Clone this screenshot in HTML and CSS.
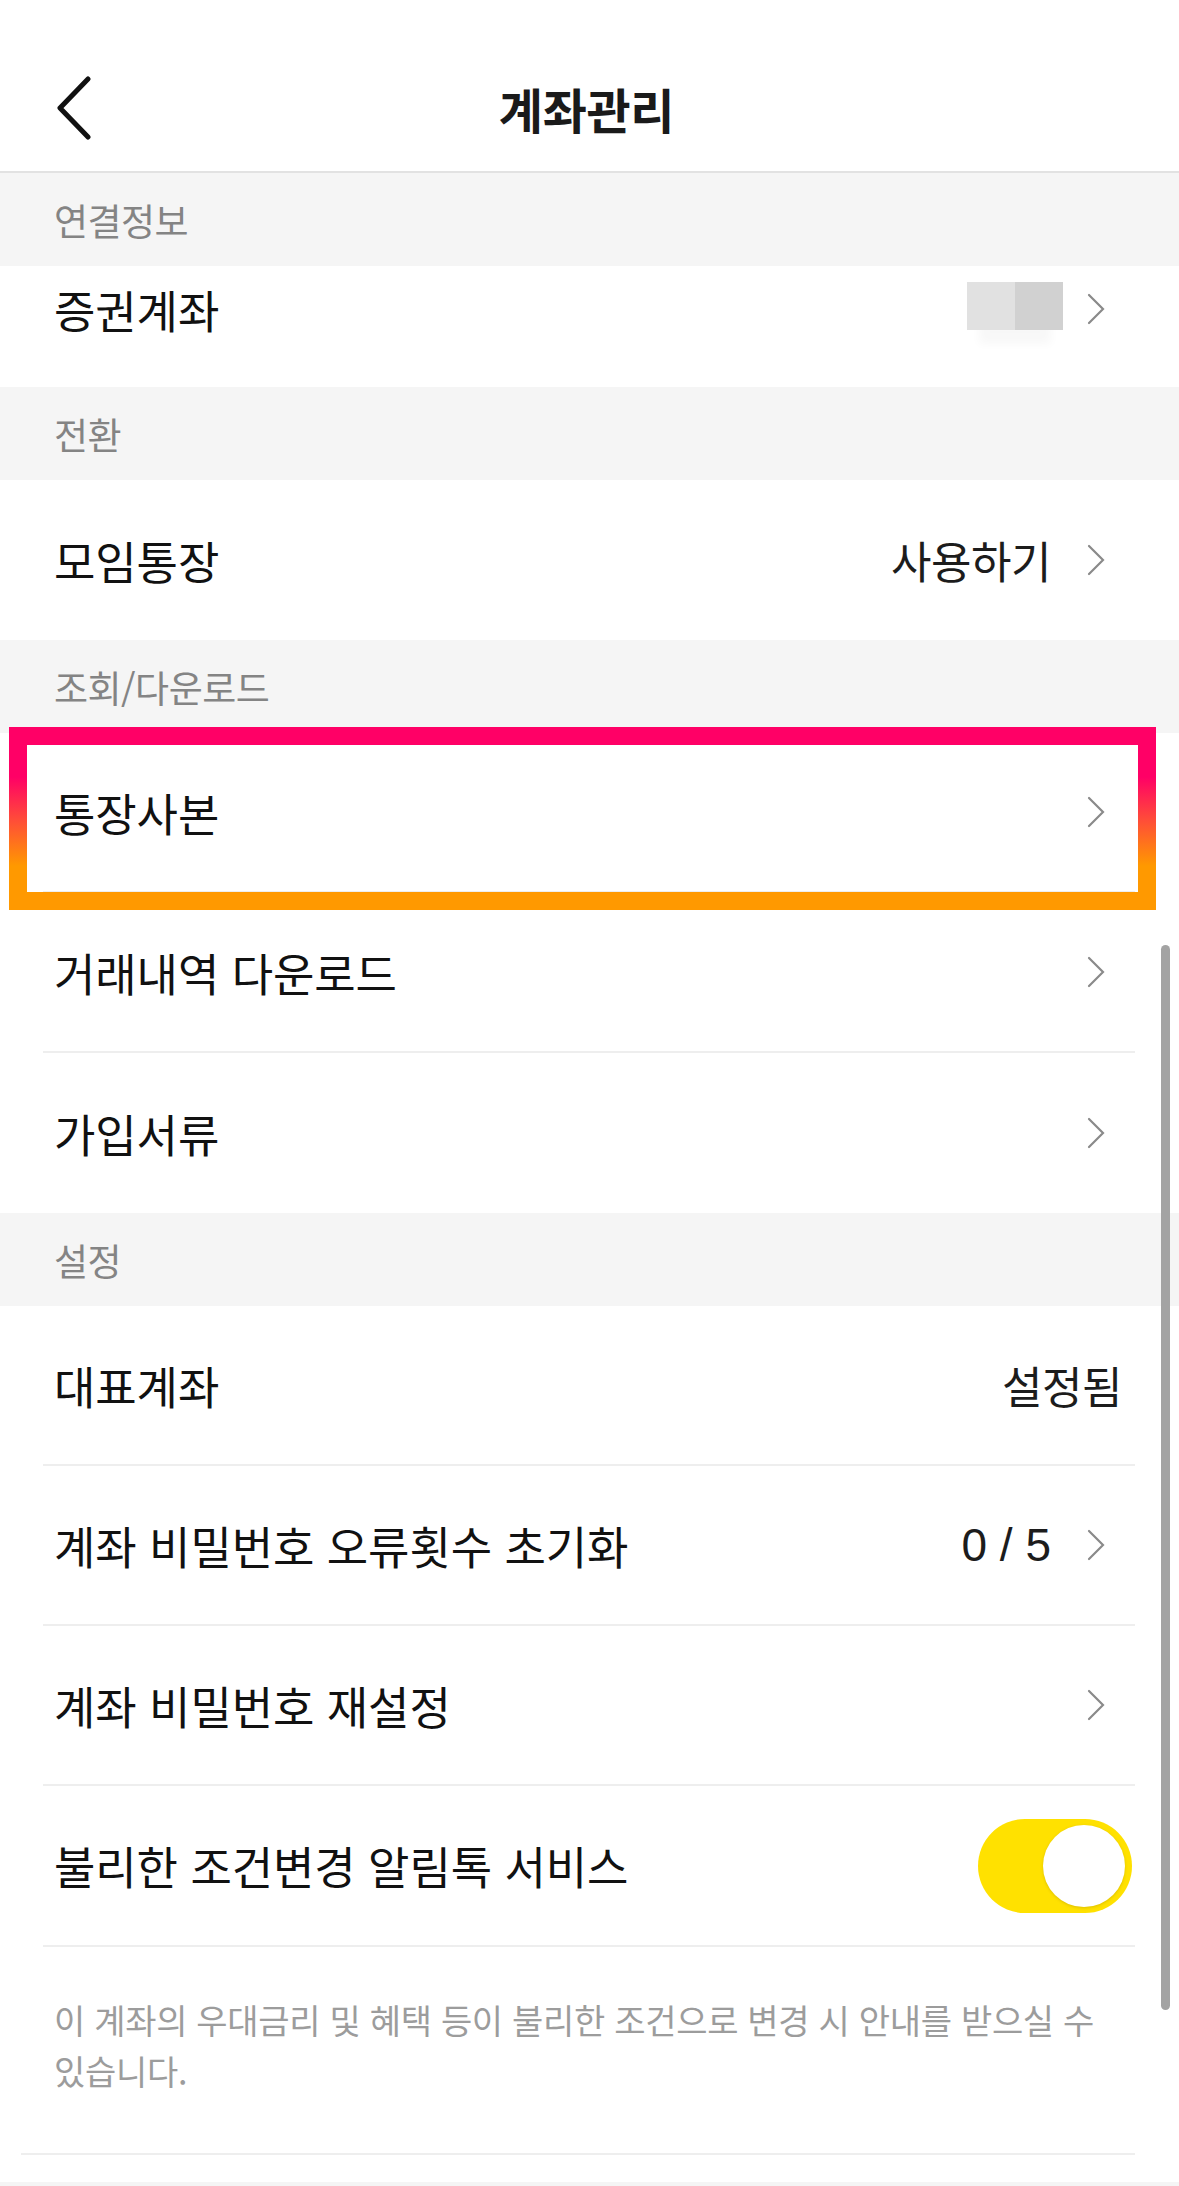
FILE: index.html
```html
<!DOCTYPE html>
<html lang="ko">
<head>
<meta charset="utf-8">
<title>계좌관리</title>
<link rel="stylesheet" href="styles.css">
</head>
<body>
<div class="page">
  <header class="topbar">
    <div class="back">
      <svg width="40" height="66" viewBox="0 0 40 66"><polyline points="31,4 3,33 31,62" fill="none" stroke="#111" stroke-width="5" stroke-linecap="round" stroke-linejoin="round"/></svg>
    </div>
    <h1 class="title">계좌관리</h1>
    <div class="spacer"></div>
  </header>

  <div class="band">연결정보</div>
  <div class="row short">
    <span class="label">증권계좌</span>
    <span class="blur"><i class="b1"></i><i class="b2"></i></span>
    <svg class="chev" viewBox="0 0 18 32"><polyline points="2,2 16,16 2,30" fill="none" stroke="#8a8a8a" stroke-width="2.2" stroke-linecap="round"/></svg>
  </div>

  <div class="band">전환</div>
  <div class="row">
    <span class="label">모임통장</span>
    <span class="value">사용하기</span>
    <svg class="chev" viewBox="0 0 18 32"><polyline points="2,2 16,16 2,30" fill="none" stroke="#8a8a8a" stroke-width="2.2" stroke-linecap="round"/></svg>
  </div>

  <div class="band">조회/다운로드</div>
  <div class="row div hl-row">
    <span class="label">통장사본</span>
    <svg class="chev" viewBox="0 0 18 32"><polyline points="2,2 16,16 2,30" fill="none" stroke="#8a8a8a" stroke-width="2.2" stroke-linecap="round"/></svg>
    <span class="highlight"></span>
  </div>
  <div class="row div">
    <span class="label">거래내역 다운로드</span>
    <svg class="chev" viewBox="0 0 18 32"><polyline points="2,2 16,16 2,30" fill="none" stroke="#8a8a8a" stroke-width="2.2" stroke-linecap="round"/></svg>
  </div>
  <div class="row">
    <span class="label">가입서류</span>
    <svg class="chev" viewBox="0 0 18 32"><polyline points="2,2 16,16 2,30" fill="none" stroke="#8a8a8a" stroke-width="2.2" stroke-linecap="round"/></svg>
  </div>

  <div class="band">설정</div>
  <div class="row div">
    <span class="label">대표계좌</span>
    <span class="value end">설정됨</span>
  </div>
  <div class="row div">
    <span class="label">계좌 비밀번호 오류횟수 초기화</span>
    <span class="value num">0 / 5</span>
    <svg class="chev" viewBox="0 0 18 32"><polyline points="2,2 16,16 2,30" fill="none" stroke="#8a8a8a" stroke-width="2.2" stroke-linecap="round"/></svg>
  </div>
  <div class="row div">
    <span class="label">계좌 비밀번호 재설정</span>
    <svg class="chev" viewBox="0 0 18 32"><polyline points="2,2 16,16 2,30" fill="none" stroke="#8a8a8a" stroke-width="2.2" stroke-linecap="round"/></svg>
  </div>
  <div class="row div tall">
    <span class="label">불리한 조건변경 알림톡 서비스</span>
    <span class="toggle"><span class="knob"></span></span>
  </div>
  <div class="desc">이 계좌의 우대금리 및 혜택 등이 불리한 조건으로 변경 시 안내를 받으실 수 있습니다.</div>
  <div class="gap"></div>
  <div class="band foot"></div>

  <div class="scrollbar"></div>
</div>
</body>
</html>
```

FILE: styles.css
```css
* { box-sizing: border-box; }
html, body { margin: 0; padding: 0; background: #fff; }
body {
  font-family: "Noto Sans CJK KR", "Noto Sans", sans-serif;
  color: #111;
}
.page {
  position: relative;
  width: 1179px;
  min-height: 2186px;
  overflow: hidden;
}
.topbar {
  height: 173px;
  padding-top: 44px;
  border-bottom: 2px solid #e2e2e2;
  display: grid;
  grid-template-columns: 1fr auto 1fr;
  align-items: center;
}
.back {
  padding-left: 57px;
  display: flex;
  align-items: center;
}
.back svg { display: block; }
.title {
  margin: 0;
  font-size: 48px;
  font-weight: 700;
  color: #1a1a1a;
  letter-spacing: -0.3px;
  line-height: 64px;
  padding-right: 6px;
}
.band {
  height: 93px;
  background: #f5f5f5;
  display: flex;
  align-items: center;
  padding-left: 54px;
  font-size: 37px;
  color: #848484;
  letter-spacing: -0.5px;
}
.band.foot { height: 30px; }
.row {
  position: relative;
  height: 160px;
  margin: 0 44px 0 43px;
  padding: 0 13px 0 11px;
  display: flex;
  align-items: center;
  font-size: 45px;
}
.row.div { border-bottom: 2px solid #eeeeee; }
.row.tall { height: 161px; }
.row.short {
  height: 121px;
  padding-bottom: 35px;
}
.label {
  flex: 1;
  color: #111;
  letter-spacing: -0.1px;
  white-space: nowrap;
}
.value {
  font-size: 44px;
  color: #1c1c1c;
  margin-right: 36px;
  letter-spacing: -0.5px;
}
.value.end { margin-right: 0; }
.value.num {
  font-family: "Liberation Sans", "Noto Sans", sans-serif;
  font-size: 46px;
  letter-spacing: 0;
  margin-right: 36px;
}
.chev {
  width: 18px;
  height: 32px;
  margin-right: 17px;
  flex: none;
}
.blur {
  display: flex;
  margin-right: 24px;
  margin-top: -6px;
  box-shadow: 0 26px 10px -12px rgba(0,0,0,0.03);
}
.blur i { display: block; width: 48px; height: 48px; }
.blur .b1 { background: #e1e1e1; }
.blur .b2 { background: #d1d1d1; }
.highlight {
  position: absolute;
  left: -34px;
  right: -21px;
  top: -6px;
  bottom: -19px;
  border: 18px solid #ff0066;
  border-image: linear-gradient(to bottom, #ff0066 22%, #ff4a3a 50%, #ff9900 82%) 1;
  pointer-events: none;
}
.toggle {
  position: relative;
  width: 154px;
  height: 94px;
  border-radius: 47px;
  background: #ffe100;
  margin-right: -10px;
  flex: none;
}
.knob {
  position: absolute;
  right: 7px;
  top: 6px;
  width: 82px;
  height: 82px;
  border-radius: 50%;
  background: #fff;
  box-shadow: 0 1px 3px rgba(120,100,0,0.25);
}
.desc {
  margin: 0 44px 0 21px;
  padding: 47px 0 57px 33px;
  border-bottom: 2px solid #eeeeee;
  font-size: 34px;
  line-height: 51px;
  color: #9c9c9c;
  letter-spacing: -0.3px;
  word-break: keep-all;
}
.gap { height: 27px; }
.scrollbar {
  position: absolute;
  left: 1161px;
  top: 945px;
  width: 9px;
  height: 1065px;
  border-radius: 5px;
  background: #a3a3a3;
}
```
